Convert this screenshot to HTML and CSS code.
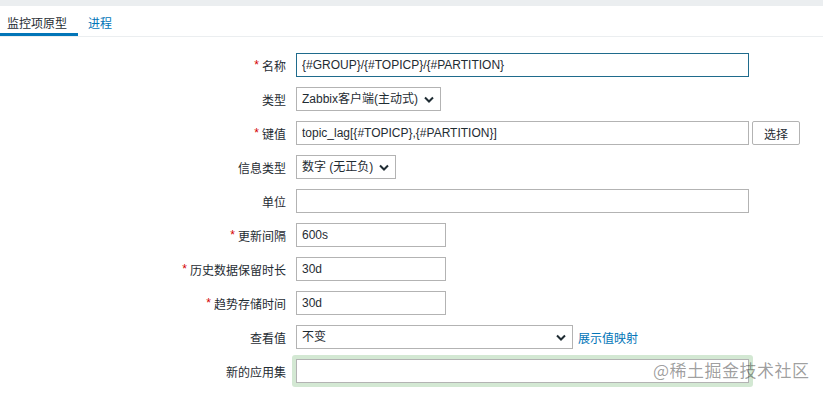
FILE: index.html
```html
<!DOCTYPE html>
<html lang="zh-CN">
<head>
  <meta charset="UTF-8">
  <title>监控项原型</title>
  <link rel="stylesheet" href="styles.css">
</head>
<body>

  <div class="top-strip"></div>

  <nav class="tabs">
    <a class="tab active" href="#">监控项原型</a>
    <a class="tab" href="#">进程</a>
  </nav>

  <form class="item-form">
    <label class="lbl"><span class="req">*</span> 名称</label>
    <div class="field"><input class="txt wide focused" type="text" value="{#GROUP}/{#TOPICP}/{#PARTITION}"></div>

    <label class="lbl">类型</label>
    <div class="field">
      <span class="sel w-type">
        <select><option>Zabbix客户端(主动式)</option></select>
        <svg class="chev" width="10" height="7" viewBox="0 0 10 7"><path d="M1 1.5 L5 5.5 L9 1.5" fill="none" stroke="#1f2c33" stroke-width="2"/></svg>
      </span>
    </div>

    <label class="lbl"><span class="req">*</span> 键值</label>
    <div class="field">
      <input class="txt wide" type="text" value="topic_lag[{#TOPICP},{#PARTITION}]">
      <button type="button" class="btn">选择</button>
    </div>

    <label class="lbl">信息类型</label>
    <div class="field">
      <span class="sel w-info">
        <select><option>数字 (无正负)</option></select>
        <svg class="chev" width="10" height="7" viewBox="0 0 10 7"><path d="M1 1.5 L5 5.5 L9 1.5" fill="none" stroke="#1f2c33" stroke-width="2"/></svg>
      </span>
    </div>

    <label class="lbl">单位</label>
    <div class="field"><input class="txt wide" type="text" value=""></div>

    <label class="lbl"><span class="req">*</span> 更新间隔</label>
    <div class="field"><input class="txt short" type="text" value="600s"></div>

    <label class="lbl"><span class="req">*</span> 历史数据保留时长</label>
    <div class="field"><input class="txt short" type="text" value="30d"></div>

    <label class="lbl"><span class="req">*</span> 趋势存储时间</label>
    <div class="field"><input class="txt short" type="text" value="30d"></div>

    <label class="lbl">查看值</label>
    <div class="field">
      <span class="sel w-map">
        <select><option>不变</option></select>
        <svg class="chev" width="10" height="7" viewBox="0 0 10 7"><path d="M1 1.5 L5 5.5 L9 1.5" fill="none" stroke="#1f2c33" stroke-width="2"/></svg>
      </span>
      <a class="link" href="#">展示值映射</a>
    </div>

    <label class="lbl">新的应用集</label>
    <div class="field">
      <span class="highlight"><input class="txt wide" type="text" value=""></span>
    </div>
  </form>

  <div class="watermark">@稀土掘金技术社区</div>

</body>
</html>
```

FILE: styles.css
```css
* {
  box-sizing: border-box;
  font-family: 'Liberation Sans', Arial, 'Noto Sans CJK SC', sans-serif;
}

body {
  margin: 0;
  background-color: #fff;
  color: #1f2c33;
  font-size: 12px;
  position: relative;
  height: 393px;
  overflow: hidden;
}

.top-strip {
  height: 6px;
  background-color: #ebeef0;
}

.tabs {
  display: flex;
  height: 31px;
  border-bottom: 1px solid #ebeef0;
}

.tab {
  display: block;
  padding: 8px 7px 0;
  margin-right: 3px;
  font-size: 12px;
  color: #0275b8;
  text-decoration: none;
}

.tab.active {
  color: #1f2c33;
  border-bottom: 3px solid #0275b8;
  padding-right: 11px;
}

.item-form {
  display: grid;
  grid-template-columns: 286px auto;
  column-gap: 10px;
  row-gap: 10px;
  padding-top: 16px;
}

.lbl {
  display: flex;
  align-items: center;
  justify-content: flex-end;
  height: 24px;
  white-space: nowrap;
}

.req {
  color: #d40000;
  margin-right: 3px;
}

.field {
  display: flex;
  align-items: center;
  height: 24px;
}

.txt {
  height: 24px;
  padding: 0 5px;
  border: 1px solid #b3b3b3;
  background-color: #fff;
  color: #1f2c33;
  font-size: 12px;
  outline: none;
}

.txt.wide {
  width: 453px;
}

.txt.short {
  width: 150px;
}

.txt.focused {
  border-color: #1f6b8c;
}

.btn {
  height: 24px;
  width: 48px;
  margin-left: 3px;
  border: 1px solid #b3b3b3;
  border-radius: 2px;
  background-color: #fff;
  color: #1f2c33;
  font-size: 12px;
  padding: 0;
}

.sel {
  position: relative;
  display: inline-block;
  height: 24px;
}

.sel select {
  appearance: none;
  -webkit-appearance: none;
  width: 100%;
  height: 24px;
  padding: 0 20px 0 5px;
  border: 1px solid #b3b3b3;
  background-color: #fff;
  color: #1f2c33;
  font-size: 12px;
  border-radius: 0;
}

.chev {
  position: absolute;
  right: 7px;
  top: 9px;
}

.w-type {
  width: 145px;
}

.w-info {
  width: 100px;
}

.w-map {
  width: 277px;
}

.link {
  margin-left: 5px;
  color: #0275b8;
  text-decoration: none;
}

.highlight {
  display: inline-block;
  padding: 4px;
  margin: -4px;
  background-color: #d3e8d3;
  border-radius: 3px;
}

.watermark {
  position: absolute;
  left: 653px;
  top: 357px;
  font-size: 17px;
  color: rgba(40, 40, 40, 0.45);
  letter-spacing: 0.5px;
  font-family: 'Noto Sans CJK SC', sans-serif;
}
```
